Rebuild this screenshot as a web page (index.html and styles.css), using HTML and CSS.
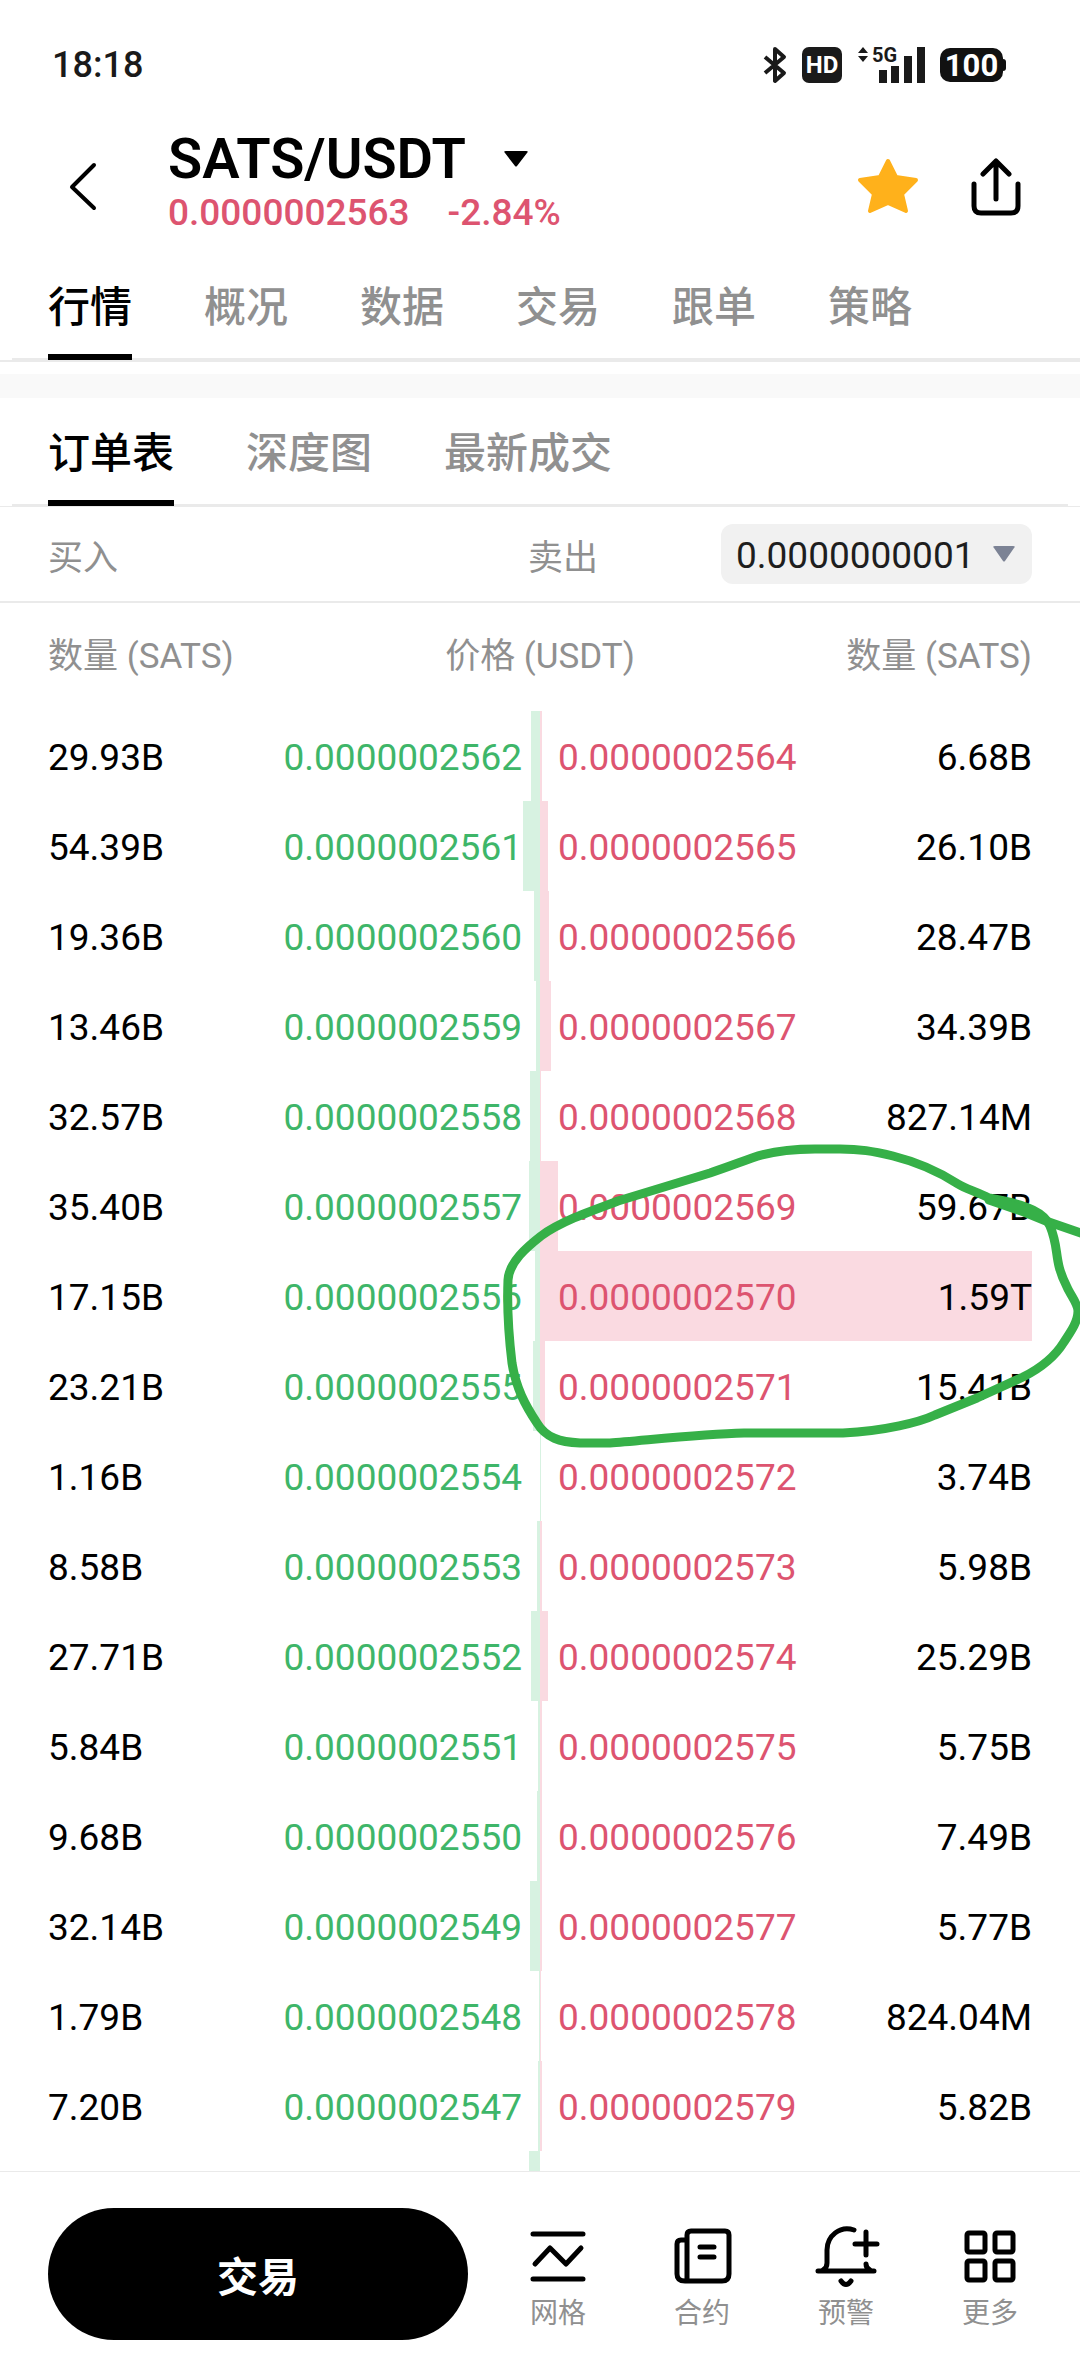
FILE: index.html
```html
<!DOCTYPE html>
<html lang="zh-CN">
<head>
    <meta charset="UTF-8">
    <meta name="viewport" content="width=device-width, initial-scale=1.0">
    <title>SATS/USDT</title>
    <link rel="stylesheet" href="styles.css">
</head>
<body>
    <div class="status-bar">
        <span class="time">18:18</span>
        <div class="status-icons">
            <svg width="24" height="38" viewBox="0 0 24 38" fill="none" stroke="#1a1a1a" stroke-width="4" stroke-linejoin="round">
                <path d="M2 11L21 27L12 35V3L21 11L2 27"/>
            </svg>
            <span class="hd">HD</span>
            <div class="signal">
                <svg width="68" height="38" viewBox="0 0 68 38" fill="#1a1a1a">
                    <path d="M1 7L6 1L11 7zM1 10H11L6 16z"/>
                    <path d="M22 24h8v13h-8zM34 20h8v17h-8zM47 10h8v27h-8zM60 1h8v36h-8z"/>
                </svg>
                <span class="net">5G</span>
            </div>
            <span class="battery">100</span>
        </div>
    </div>

    <header class="header">
        <button type="button" class="icon-btn back" aria-label="返回">
            <svg width="30" height="50" viewBox="0 0 30 50" fill="none" stroke="#000" stroke-width="4" stroke-linecap="round" stroke-linejoin="round">
                <path d="M26 4L4 26L26 47"/>
            </svg>
        </button>
        <div class="pair">
            <h1>SATS/USDT
                <svg width="24" height="16" viewBox="0 0 24 16"><path d="M2 0H22Q25 0 23 2L13 15Q12 16 11 15L1 2Q-1 0 2 0z"/></svg>
            </h1>
            <p><span>0.0000002563</span><span>-2.84%</span></p>
        </div>
        <button type="button" class="icon-btn" aria-label="收藏">
            <svg width="62" height="58" viewBox="0 0 62 58" fill="#ffb11b" stroke="#ffb11b" stroke-width="4" stroke-linejoin="round">
                <path d="M31 4L39 20L59 23L45 37L49 54L31 46L13 54L17 37L3 23L23 20z"/>
            </svg>
        </button>
        <button type="button" class="icon-btn" aria-label="分享">
            <svg width="50" height="58" viewBox="0 0 50 58" fill="none" stroke="#000" stroke-width="5" stroke-linecap="round" stroke-linejoin="round">
                <path d="M25 42V4M12 17L25 4L38 17M3 27V49Q3 56 10 56H40Q47 56 47 49V27"/>
            </svg>
        </button>
    </header>

    <nav class="tabs main-tabs">
        <ul>
            <li><a href="#" class="active">行情</a></li>
            <li><a href="#">概况</a></li>
            <li><a href="#">数据</a></li>
            <li><a href="#">交易</a></li>
            <li><a href="#">跟单</a></li>
            <li><a href="#">策略</a></li>
        </ul>
    </nav>
    <div class="divider"></div>
    <nav class="tabs sub-tabs">
        <ul>
            <li><a href="#" class="active">订单表</a></li>
            <li><a href="#">深度图</a></li>
            <li><a href="#">最新成交</a></li>
        </ul>
    </nav>

    <div class="toolbar">
        <span class="buy">买入</span>
        <label for="precision">卖出</label>
        <div class="select-box">
            <select id="precision">
                <option>0.0000000001</option>
            </select>
            <svg width="22" height="16" viewBox="0 0 22 16" fill="#7c8395"><path d="M2 0H20Q23 0 21 2L12 15Q11 16 10 15L1 2Q-1 0 2 0z"/></svg>
        </div>
    </div>

    <main class="book">
        <table>
            <thead>
                <tr>
                    <th>数量 (SATS)</th>
                    <th colspan="2">价格 (USDT)</th>
                    <th>数量 (SATS)</th>
                </tr>
            </thead>
            <tbody id="orders"></tbody>
        </table>
        <!-- hand-drawn marker round the big sell order -->
        <svg class="marker" width="580" height="320" viewBox="500 1140 580 320" fill="none" stroke="#36b048" stroke-width="9" stroke-linecap="round" stroke-linejoin="round">
            <path d="M989 1198C975 1191 966 1189 958 1184C938 1171 917 1162 893 1156C872 1151 860 1149 840 1149H815C790 1149 772 1151 752 1158C730 1166 725 1168 710 1173L618 1201C588 1212 560 1222 541 1236C527 1247 509 1262 508 1280C507 1305 508 1330 512 1363C516 1388 525 1405 537 1423C546 1438 560 1442 580 1443H610C640 1441 700 1434 744 1433H843C885 1431 920 1422 935 1415L977 1398L1023 1377C1045 1366 1056 1355 1064 1342C1072 1330 1078 1321 1078 1311C1078 1304 1071 1296 1067 1287C1053 1260 1060 1250 1050 1226C1045 1214 1030 1205 989 1198"/>
            <path d="M989 1200L1024 1212L1046 1221L1084 1234"/>
            <path d="M995 1200L1032 1213L1044 1219"/>
        </svg>
    </main>

    <footer class="footer">
        <button type="button" class="trade">交易</button>
        <nav class="actions">
            <a href="#">
                <svg width="60" height="60" viewBox="0 0 60 60">
                    <path d="M5 8H55M5 53H55M7 38L22 22L38 38L53 22"/>
                </svg>
                网格
            </a>
            <a href="#">
                <svg width="60" height="60" viewBox="0 0 60 60">
                    <path d="M15 55V9Q15 5 19 5H53Q57 5 57 9V48Q57 55 50 55H13Q5 55 5 48V18Q5 14 9 14H15M28 21H42M28 31H42"/>
                </svg>
                合约
            </a>
            <a href="#">
                <svg width="60" height="60" viewBox="0 0 60 60">
                    <path d="M38 4C24 -1 11 10 11 24V37Q11 42 7 44M2 45H58M50 38Q50 42 54 44M39 18H61M50 6V29M25 55Q30 62 35 55"/>
                </svg>
                预警
            </a>
            <a href="#">
                <svg width="60" height="60" viewBox="0 0 60 60">
                    <rect x="7" y="7" width="18" height="19" rx="2"/>
                    <rect x="35" y="7" width="18" height="19" rx="2"/>
                    <rect x="7" y="35" width="18" height="19" rx="2"/>
                    <rect x="35" y="35" width="18" height="19" rx="2"/>
                </svg>
                更多
            </a>
        </nav>
    </footer>
    <script src="script.js"></script>
</body>
</html>
```

FILE: styles.css
```css
* {
    box-sizing: border-box;
}

body {
    font-family: Roboto, "Noto Sans CJK SC", sans-serif;
    background-color: #fff;
    color: #000;
    margin: 0;
    height: 100vh;
    display: flex;
    flex-direction: column;
    overflow: hidden;
}

button {
    font-family: inherit;
    border: none;
    background: none;
    padding: 0;
    cursor: pointer;
}

a {
    text-decoration: none;
    color: #909090;
}

svg {
    display: block;
    overflow: visible;
}

/* status bar */
.status-bar {
    display: flex;
    justify-content: space-between;
    align-items: center;
    height: 128px;
    padding: 2px 77px 0 52px;
    color: #1a1a1a;
    flex-shrink: 0;
}

.time {
    font-size: 36px;
    font-weight: 500;
}

.status-icons {
    display: flex;
    align-items: center;
    gap: 15px;
}

.hd {
    width: 40px;
    height: 36px;
    border-radius: 7px;
    background-color: #1a1a1a;
    color: #fff;
    font-size: 24px;
    line-height: 36px;
    font-weight: 700;
    text-align: center;
}

.signal {
    position: relative;
}

.net {
    position: absolute;
    left: 15px;
    top: 0;
    font-size: 20px;
    line-height: 18px;
    font-weight: 700;
}

.battery {
    position: relative;
    width: 63px;
    height: 34px;
    border-radius: 10px;
    background-color: #111;
    color: #fff;
    font-size: 31px;
    line-height: 35px;
    font-weight: 700;
    text-align: center;
}

.battery::after {
    content: "";
    position: absolute;
    right: -3px;
    top: 11px;
    width: 4px;
    height: 12px;
    border-radius: 0 3px 3px 0;
    background-color: #111;
}

/* header */
.header {
    display: flex;
    align-items: center;
    gap: 52px;
    height: 116px;
    padding: 0 59px 0 68px;
    flex-shrink: 0;
}

.back {
    margin-right: 18px;
}

.pair {
    flex: 1;
    padding-bottom: 6px;
}

h1 {
    display: flex;
    align-items: center;
    gap: 38px;
    margin: 0;
    font-size: 56px;
    line-height: 60px;
    font-weight: 600;
}

.pair p {
    display: flex;
    gap: 38px;
    margin: 0;
    font-size: 37px;
    line-height: 48px;
    font-weight: 500;
    color: #dd5470;
}

/* tabs */
.tabs {
    border-bottom: 2px solid #eaeaea;
    flex-shrink: 0;
}

.tabs ul {
    display: flex;
    gap: 72px;
    list-style: none;
    margin: 0 0 0 12px;
    padding: 0 36px;
    border-bottom: 2px solid #eaeaea;
}

.tabs a {
    display: block;
    font-size: 42px;
    font-weight: 500;
    line-height: 92px;
    padding-top: 18px;
    margin-bottom: -2px;
    border-bottom: 6px solid transparent;
}

.tabs a.active {
    color: #000;
    border-bottom-color: #000;
}

.sub-tabs {
    border-bottom-width: 1px;
}

.sub-tabs ul {
    margin-right: 12px;
}

.sub-tabs a {
    padding-top: 10px;
}

.divider {
    height: 24px;
    margin-top: 12px;
    background-color: #f9f9f9;
    flex-shrink: 0;
}

/* buy / sell row */
.toolbar {
    display: flex;
    align-items: center;
    height: 96px;
    padding: 0 48px;
    border-bottom: 2px solid #eaeaea;
    font-size: 35px;
    color: #909090;
    flex-shrink: 0;
}

.toolbar .buy {
    width: 480px;
}

.select-box {
    position: relative;
    margin-left: auto;
}

.select-box select {
    appearance: none;
    width: 311px;
    height: 60px;
    padding: 2px 15px 0;
    border: none;
    border-radius: 12px;
    background-color: #f1f1f1;
    color: #1e1e1e;
    font-family: inherit;
    font-size: 37px;
}

.select-box svg {
    position: absolute;
    right: 17px;
    top: 22px;
    pointer-events: none;
}

/* order book */
.book {
    position: relative;
    flex: 1;
    min-height: 0;
    overflow: hidden;
    padding: 0 48px;
}

.book table,
.book thead,
.book tbody {
    display: block;
}

.book tr {
    position: relative;
    display: grid;
    grid-template-columns: repeat(4, 1fr);
    align-items: center;
    height: 90px;
    padding-top: 3px;
    font-size: 37px;
}

.book thead tr {
    grid-template-columns: 1fr auto 1fr;
    height: 108px;
    padding: 0 0 10px;
}

.book th {
    padding: 0;
    font-size: 35px;
    font-weight: 400;
    color: #909090;
    text-align: left;
}

.book th:last-child,
.book td:last-child {
    text-align: right;
}

.book td {
    position: relative;
    padding: 0;
}

.book .bid {
    color: #3eb669;
    text-align: right;
    padding-right: 18px;
}

.book .ask {
    color: #dd5470;
    padding-left: 18px;
}

.book tr::before,
.book tr::after {
    content: "";
    position: absolute;
    top: 0;
    bottom: 0;
}

.book tr::before {
    right: 50%;
    width: var(--bid, 0);
    background-color: #d7f2e1;
}

.book tr::after {
    left: 50%;
    width: var(--ask, 0);
    background-color: #fadae1;
    z-index: -1;
}

.marker {
    position: absolute;
    right: 0;
    top: 537px;
}

/* footer */
.footer {
    display: flex;
    gap: 18px;
    height: 205px;
    padding: 36px 18px 0 48px;
    border-top: 1px solid #eaeaea;
    flex-shrink: 0;
}

.trade {
    width: 420px;
    height: 132px;
    border-radius: 66px;
    background-color: #000;
    color: #fff;
    font-size: 41px;
    font-weight: 700;
}

.actions {
    flex: 1;
    display: flex;
}

.actions a {
    flex: 1;
    display: flex;
    flex-direction: column;
    align-items: center;
    gap: 12px;
    padding-top: 18px;
    font-size: 28px;
    line-height: 32px;
}

.actions svg {
    fill: none;
    stroke: #000;
    stroke-width: 5;
    stroke-linecap: round;
    stroke-linejoin: round;
}
```

FILE: script.js
```js
// buy amount, buy price, sell price, sell amount
const orders = [
    ['29.93B', '0.0000002562', '0.0000002564', '6.68B'],
    ['54.39B', '0.0000002561', '0.0000002565', '26.10B'],
    ['19.36B', '0.0000002560', '0.0000002566', '28.47B'],
    ['13.46B', '0.0000002559', '0.0000002567', '34.39B'],
    ['32.57B', '0.0000002558', '0.0000002568', '827.14M'],
    ['35.40B', '0.0000002557', '0.0000002569', '59.67B'],
    ['17.15B', '0.0000002556', '0.0000002570', '1.59T'],
    ['23.21B', '0.0000002555', '0.0000002571', '15.41B'],
    ['1.16B', '0.0000002554', '0.0000002572', '3.74B'],
    ['8.58B', '0.0000002553', '0.0000002573', '5.98B'],
    ['27.71B', '0.0000002552', '0.0000002574', '25.29B'],
    ['5.84B', '0.0000002551', '0.0000002575', '5.75B'],
    ['9.68B', '0.0000002550', '0.0000002576', '7.49B'],
    ['32.14B', '0.0000002549', '0.0000002577', '5.77B'],
    ['1.79B', '0.0000002548', '0.0000002578', '824.04M'],
    ['7.20B', '0.0000002547', '0.0000002579', '5.82B']
];

const units = { M: 1e6, B: 1e9, T: 1e12 };

function toNumber(amount) {
    return parseFloat(amount) * units[amount.slice(-1)];
}

const max = Math.max(...orders.flatMap(o => [toNumber(o[0]), toNumber(o[3])]));
const body = document.getElementById('orders');

function addRow(cells, bid, ask) {
    const row = body.insertRow();
    // each side of the book is half of the row
    row.style.setProperty('--bid', (bid / max * 50) + '%');
    row.style.setProperty('--ask', (ask / max * 50) + '%');
    cells.forEach((text, i) => {
        const cell = row.insertCell();
        cell.textContent = text;
        if (i === 1) cell.className = 'bid';
        if (i === 2) cell.className = 'ask';
    });
}

orders.forEach(o => addRow(o, toNumber(o[0]), toNumber(o[3])));
addRow([], 36e9, 0);
```
